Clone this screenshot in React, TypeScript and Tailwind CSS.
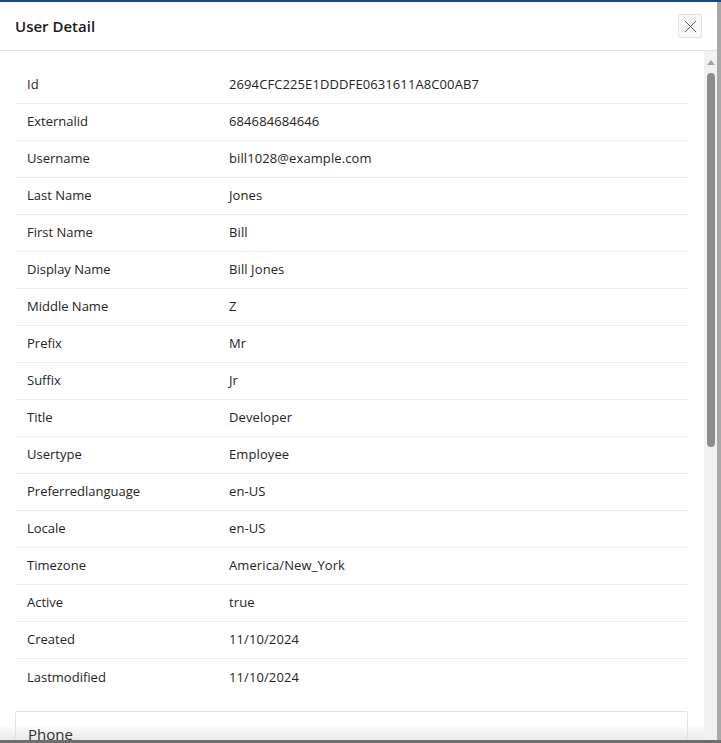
import { X } from 'lucide-react'

const ROWS: [string, string][] = [
  ['Id', '2694CFC225E1DDDFE0631611A8C00AB7'],
  ['Externalid', '684684684646'],
  ['Username', 'bill1028@example.com'],
  ['Last Name', 'Jones'],
  ['First Name', 'Bill'],
  ['Display Name', 'Bill Jones'],
  ['Middle Name', 'Z'],
  ['Prefix', 'Mr'],
  ['Suffix', 'Jr'],
  ['Title', 'Developer'],
  ['Usertype', 'Employee'],
  ['Preferredlanguage', 'en-US'],
  ['Locale', 'en-US'],
  ['Timezone', 'America/New_York'],
  ['Active', 'true'],
  ['Created', '11/10/2024'],
  ['Lastmodified', '11/10/2024'],
]

export default function App() {
  return (
    <div
      className="w-[721px] h-[743px] overflow-hidden flex flex-col bg-[#9c9c9c] text-[#242424]"
      style={{ fontFamily: '"Open Sans", "Noto Sans", sans-serif' }}
    >
      <div className="h-[2px] bg-[#0c4b8c] shrink-0" />
      <div className="flex flex-1 min-h-0">
        {/* Modal */}
        <div className="w-[717px] bg-white flex flex-col min-h-0">
          {/* Header */}
          <div className="h-[49px] shrink-0 border-b border-[#e3e3e3] flex items-center justify-between pl-[15px] pr-[15px]">
            <h1 className="text-[15px] font-semibold text-[#1b1b1b] pt-[1px]">User Detail</h1>
            <button className="w-[24px] h-[24px] flex items-center justify-center border border-[#e2e2e2] bg-[#f8f8f8] rounded-[2px]">
              <X className="w-[21px] h-[21px] text-[#555]" strokeWidth={1.1} />
            </button>
          </div>

          {/* Body */}
          <div className="flex flex-1 min-h-0 relative">
            {/* bottom fade */}
            <div className="absolute left-0 right-0 bottom-0 h-[16px] bg-gradient-to-b from-[#ffffff] to-[#e9e9e9] pointer-events-none" />

            <div className="relative flex-1 overflow-hidden pl-[15px] pr-[16px] pt-[16px]">
              <div className="flex flex-col">
                {ROWS.map(([label, value], i) => (
                  <div
                    key={label}
                    className={
                      'h-[37px] flex items-center text-[13px] ' +
                      (i < ROWS.length - 1 ? 'border-b border-[#ececec]' : '')
                    }
                  >
                    <div className="w-[214px] pl-[12px] shrink-0">{label}</div>
                    <div className="tracking-[0.1px]">{value}</div>
                  </div>
                ))}
              </div>

              <div className="mt-[15px] border border-[#e2e2e2] rounded-[2px] px-[12px] pt-[11px] pb-[20px]">
                <h2 className="text-[15px] font-medium text-[#2f2f2f]">Phone</h2>
              </div>
            </div>

            {/* Scrollbar */}
            <div className="relative w-[13px] shrink-0 bg-[#f1f1f1] flex flex-col items-center">
              <div className="h-[22px] flex items-center justify-center pl-[1px]">
                <svg width="8" height="5" viewBox="0 0 8 5">
                  <path d="M4 0 L8 5 L0 5 Z" fill="#a3a3a3" />
                </svg>
              </div>
              <div className="w-[8px] h-[374px] ml-[1px] rounded-full bg-[#8c8c8c]" />
            </div>
          </div>
        </div>
        <div className="flex-1 bg-[#a8a8a8]" />
      </div>
      <div className="h-[3px] bg-[#6e6e6e] shrink-0" />
    </div>
  )
}
